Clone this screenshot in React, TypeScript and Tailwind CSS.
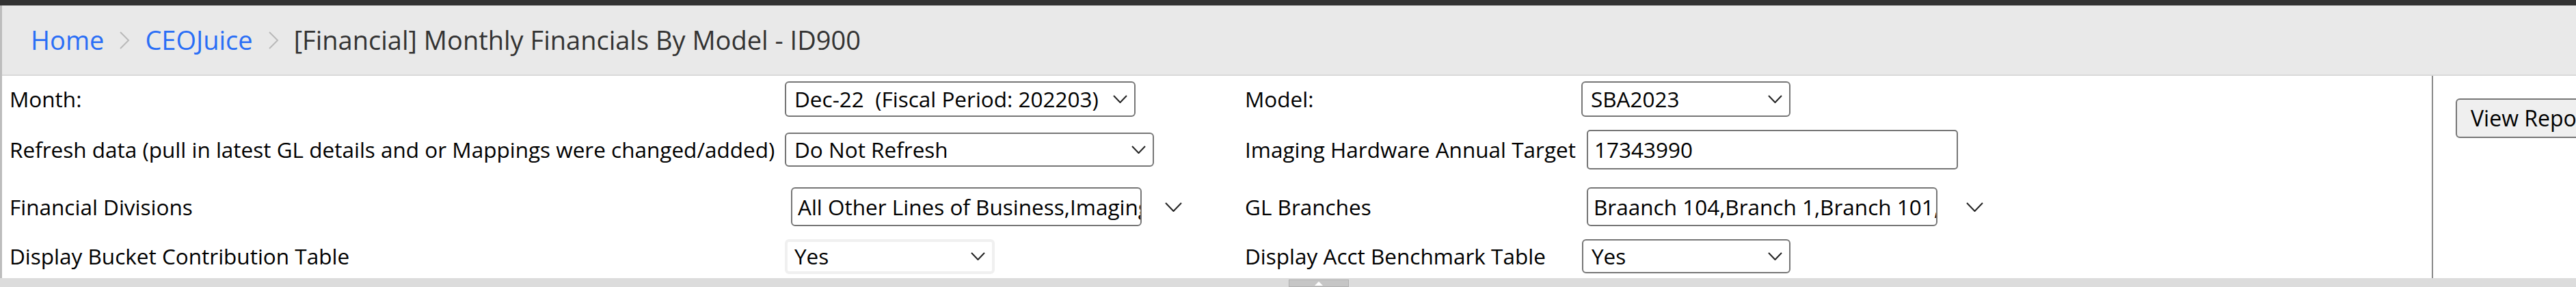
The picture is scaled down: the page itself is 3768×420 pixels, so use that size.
import React from 'react';

const font = { fontFamily: '"Open Sans", "Noto Sans", sans-serif' };

// Small chevron used inside the select boxes and next to the multi-select lists
function Chevron({ w, h, color = '#222' }: { w: number; h: number; color?: string }) {
  return (
    <svg width={w} height={h} viewBox={`0 0 ${w} ${h}`} fill="none" className="shrink-0">
      <polyline points={`1,1 ${w / 2},${h - 1} ${w - 1},1`} stroke={color} strokeWidth="2" />
    </svg>
  );
}

function Crumb() {
  return (
    <svg width="16" height="26" viewBox="0 0 16 26" fill="none" className="shrink-0">
      <polyline points="2,1 14,13 2,25" stroke="#b9b9b9" strokeWidth="2" />
    </svg>
  );
}

interface SelectBoxProps {
  value: string;
  className: string;
}

function SelectBox({ value, className }: SelectBoxProps) {
  return (
    <div className={`flex items-center justify-between rounded-[6px] bg-white pl-[12px] pr-[10px] text-[31.5px] text-black ${className}`}>
      <span className="whitespace-pre leading-none">{value}</span>
      <Chevron w={21} h={12} />
    </div>
  );
}

function ListBox({ value, gap }: { value: string; gap: string }) {
  return (
    <div className="flex items-center">
      <div className="flex h-[57px] w-[513px] items-center overflow-hidden rounded-[6px] border-2 border-[#767676] pl-[8px] text-[31.5px] text-black">
        <span className="whitespace-nowrap leading-none">{value}</span>
      </div>
      <div className={gap}>
        <Chevron w={25} h={14} />
      </div>
    </div>
  );
}

export default function App() {
  return (
    <div className="flex h-[420px] w-[3768px] flex-col overflow-hidden bg-white" style={font}>
      <div className="h-[8px] bg-[#333333]" />

      <div className="flex h-[399px]">
        {/* left frame edge */}
        <div className="w-[8px] border-r-[3px] border-[#bdbdbd] bg-[#d4d4d4]" />

        <div className="flex flex-1 flex-col">
          {/* Breadcrumb */}
          <div className="flex h-[103px] items-center gap-[22px] border-b-2 border-[#d9d9d9] bg-[#e9e9e9] pl-[42px] text-[38px]">
            <span className="text-[#2a6ef6]">Home</span>
            <Crumb />
            <span className="text-[#2a6ef6]">CEOJuice</span>
            <Crumb />
            <span className="text-[#333]">[Financial] Monthly Financials By Model - ID900</span>
          </div>

          <div className="flex h-[296px]">
            {/* Parameters */}
            <div className="grid w-[3554px] grid-cols-[1134px_673px_492px_1fr] grid-rows-[68px_79px_89px_56px] items-center pl-[11px] text-[31.5px] text-black">
              <span>Month:</span>
              <SelectBox value="Dec-22  (Fiscal Period: 202203)" className="h-[52px] w-[513px] border-2 border-[#767676]" />
              <span>Model:</span>
              <SelectBox value="SBA2023" className="h-[52px] w-[306px] border-2 border-[#767676]" />

              <span className="whitespace-nowrap">Refresh data (pull in latest GL details and or Mappings were changed/added)</span>
              <SelectBox value="Do Not Refresh" className="h-[50px] w-[540px] border-2 border-[#767676]" />
              <span className="whitespace-nowrap">Imaging Hardware Annual Target</span>
              <div className="ml-[8px] flex h-[58px] w-[543px] items-center rounded-[5px] border-2 border-[#767676] pl-[9px] leading-none">
                17343990
              </div>

              <span>Financial Divisions</span>
              <div className="ml-[9px]">
                <ListBox value="All Other Lines of Business,Imaging" gap="ml-[34px]" />
              </div>
              <span>GL Branches</span>
              <div className="ml-[8px]">
                <ListBox value="Braanch 104,Branch 1,Branch 101,Br" gap="ml-[42px]" />
              </div>

              <span>Display Bucket Contribution Table</span>
              <SelectBox value="Yes" className="h-[51px] w-[307px] border-[4px] border-[#f0f0f0] !pl-[10px]" />
              <span>Display Acct Benchmark Table</span>
              <div className="ml-[1px]">
                <SelectBox value="Yes" className="h-[50px] w-[305px] border-2 border-[#767676]" />
              </div>
            </div>

            {/* Action column */}
            <div className="flex-1 border-l-2 border-[#8a8a8a] pl-[33px] pt-[33px]">
              <button className="flex h-[58px] items-center whitespace-nowrap rounded-[6px] border-2 border-[#767676] bg-[#efefef] px-[20px] text-[32px] leading-none text-black">
                View Report
              </button>
            </div>
          </div>
        </div>
      </div>

      {/* bottom splitter bar */}
      <div className="flex h-[13px] bg-[#dcdcdc] pl-[1885px]">
        <div className="mt-[2px] flex h-[11px] w-[88px] justify-center border border-[#b0b0b0] bg-[#c6c6c6]">
          <div className="mt-[2px] h-0 w-0 border-x-[6px] border-b-[6px] border-x-transparent border-b-white" />
        </div>
      </div>
    </div>
  );
}
